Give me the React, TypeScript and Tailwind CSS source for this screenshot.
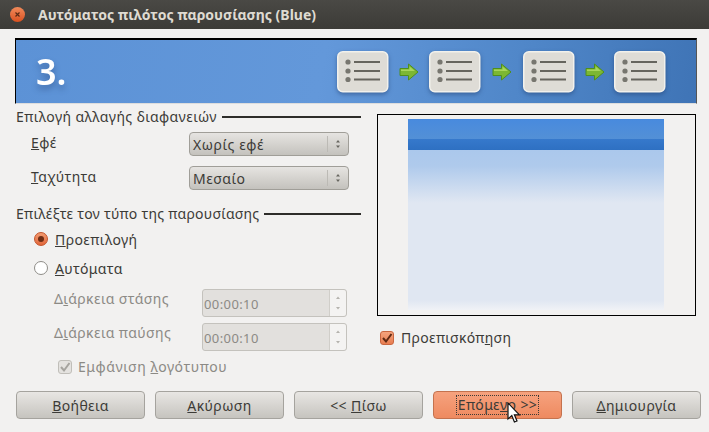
const btnBase = "h-[28px] w-[129px] rounded-[4px] border text-[14px] tracking-[0.4px] flex items-center justify-center";

function ListIcon() {
  return (
    <svg width="52" height="42" viewBox="0 0 52 42" className="drop-shadow-[0_2px_2px_rgba(30,60,110,0.5)]">
      <rect x="0.75" y="0.75" width="50" height="40" rx="5" fill="#dedcd6" stroke="#f2f1ec" strokeWidth="1.5" />
      <circle cx="11" cy="11" r="2.6" fill="#77766f" />
      <circle cx="11" cy="20" r="2.6" fill="#77766f" />
      <circle cx="11" cy="28.5" r="2.6" fill="#77766f" />
      <path d="M17 11H43M17 20H43M17 28.5H43" stroke="#66655e" strokeWidth="2" />
    </svg>
  );
}

function Arrow() {
  return (
    <svg width="20" height="18" viewBox="0 0 20 18">
      <path d="M1 5.5H9.5V1L19 9L9.5 17V12.5H1Z" fill="#7cb733" stroke="#4f8f1c" strokeWidth="1" />
      <path d="M2 6.5H10.5V3.5L16 8H2Z" fill="#a8d65c" />
    </svg>
  );
}

function Combo({ value }: { value: string }) {
  return (
    <div className="h-[24px] w-[160px] rounded-[4px] border border-[#a09e98] bg-gradient-to-b from-[#e6e4e1] to-[#c4c2bd] flex items-center text-[14px] tracking-[0.6px] text-[#3c3b37] pl-[3px]">
      <span className="flex-1">{value}</span>
      <div className="h-[16px] w-[1px] bg-[#bcbab5]" />
      <svg width="20" height="14" viewBox="0 0 20 14">
        <path d="M8 5.5L10 3L12 5.5Z M8 8.5L10 11L12 8.5Z" fill="#66655f" />
      </svg>
    </div>
  );
}

function Spin({ label, mnemonic, rest }: { label: string; mnemonic: string; rest: string }) {
  return (
    <div className="flex items-start">
      <span className="w-[186px] pl-[38px] text-[14px] tracking-[0.4px] text-[#8c8a85] mt-[-1px]">
        {label}
        <u>{mnemonic}</u>
        {rest}
      </span>
      <div className="h-[28px] w-[145px] rounded-[3px] border border-[#c4c2bd] bg-[#e2e0dd] flex text-[13px] tracking-[0.4px] text-[#8c8a85]">
        <span className="w-[127px] flex items-center pl-[1px] pt-[3px] border-r border-[#d0cec9]">00:00:10</span>
        <div className="flex-1 rounded-r-[3px] bg-[#f4f3f2] flex items-center justify-center">
          <svg width="10" height="18" viewBox="0 0 10 18">
            <path d="M3 5L5 2.5L7 5Z M3 13L5 15.5L7 13Z" fill="#b5b3ae" />
          </svg>
        </div>
      </div>
    </div>
  );
}

function GroupTitle({ text, wide }: { text: string; wide?: boolean }) {
  return (
    <div className={"flex items-center gap-[5px] text-[14px] leading-[18px] text-[#3c3b37] " + (wide ? "tracking-[0.4px]" : "tracking-[0.25px]")}>
      <span>{text}</span>
      <div className="h-[2px] flex-1 bg-[#2e2d2a]" />
    </div>
  );
}

function GrayButton({ children }: { children: React.ReactNode }) {
  return (
    <button className={btnBase + " border-[#a5a39e] bg-gradient-to-b from-[#e8e6e3] to-[#c6c4bf] text-[#3c3b37]"}>
      {children}
    </button>
  );
}

export default function App() {
  return (
    <div
      className="relative w-[709px] h-[432px] overflow-hidden bg-[#f2f1f0] flex flex-col"
      style={{ fontFamily: '"Noto Sans", sans-serif' }}
    >
      <div className="h-[29px] shrink-0 bg-gradient-to-b from-[#4a4945] to-[#3c3b37] flex items-center pl-[10px] gap-[13px]">
        <div className="w-[15px] h-[15px] rounded-full bg-gradient-to-b from-[#f08a5a] to-[#d9501e] flex items-center justify-center">
          <svg width="7" height="7" viewBox="0 0 7 7">
            <path d="M1.5 1.5L5.5 5.5M5.5 1.5L1.5 5.5" stroke="#5a2a14" strokeWidth="1.2" />
          </svg>
        </div>
        <span className="text-[14px] font-bold text-[#dfdbd2]">Αυτόματος πιλότος παρουσίασης (Blue)</span>
      </div>

      <div className="shrink-0 mx-[15px] mt-[9px] w-[682px] h-[66px] border-t-2 border-l border-t-black border-l-black border-r border-b border-r-[#555] border-b-[#ddd] bg-[linear-gradient(100deg,#5c92d6_0%,#6398da_45%,#4f86c8_75%,#3f74b6_100%)] flex items-center pr-[30px]">
        <span className="ml-[20px] text-[36px] leading-none font-semibold text-white flex-1 drop-shadow-[0_4px_3px_rgba(30,60,110,0.45)]">3.</span>
        <div className="flex items-center">
          <ListIcon />
          <div className="w-[40px] flex justify-center"><Arrow /></div>
          <ListIcon />
          <div className="w-[42px] flex justify-center"><Arrow /></div>
          <ListIcon />
          <div className="w-[39px] flex justify-center"><Arrow /></div>
          <ListIcon />
        </div>
      </div>

      <div className="flex pl-[16px] pt-[2px] flex-1">
        <div className="w-[345px] flex flex-col">
          <div className="mt-[2px]"><GroupTitle wide text="Επιλογή αλλαγής διαφανειών" /></div>
          <div className="mt-[6px] flex items-start">
            <span className="w-[173px] pl-[15px] text-[14px] tracking-[0.4px] text-[#3c3b37]"><u>Ε</u>φέ</span>
            <Combo value="Χωρίς εφέ" />
          </div>
          <div className="mt-[10px] flex items-start">
            <span className="w-[173px] pl-[15px] text-[14px] tracking-[0.4px] text-[#3c3b37]"><u>Τ</u>αχύτητα</span>
            <Combo value="Μεσαίο" />
          </div>

          <div className="mt-[15px]"><GroupTitle text="Επιλέξτε τον τύπο της παρουσίασης" /></div>

          <div className="mt-[6px] ml-[18px] flex items-center gap-[7px] h-[20px] text-[14px] tracking-[0.4px] text-[#3c3b37]">
            <div className="w-[14px] h-[14px] rounded-full border border-[#c4532a] bg-gradient-to-b from-[#f29a70] to-[#e2673a] flex items-center justify-center">
              <div className="w-[6px] h-[6px] rounded-full bg-[#6e2d14]" />
            </div>
            <span><u>Π</u>ροεπιλογή</span>
          </div>
          <div className="mt-[9px] ml-[18px] flex items-center gap-[7px] h-[20px] text-[14px] tracking-[0.4px] text-[#3c3b37]">
            <div className="w-[14px] h-[14px] rounded-full border border-[#8f8d88] bg-white" />
            <span><u>Α</u>υτόματα</span>
          </div>

          <div className="mt-[11px] flex flex-col gap-[6px]">
            <Spin label="Δ" mnemonic="ι" rest="άρκεια στάσης" />
            <Spin label="Δ" mnemonic="ι" rest="άρκεια παύσης" />
          </div>

          <div className="mt-[5px] ml-[42px] flex items-center gap-[6px] text-[14px] tracking-[0.55px] text-[#8c8a85]">
            <div className="w-[14px] h-[14px] rounded-[3px] border border-[#c0beb9] bg-[#e4e2df] flex items-center justify-center">
              <svg width="12" height="12" viewBox="0 0 12 12">
                <path d="M2 6L5 9.5L10.5 2" fill="none" stroke="#a5a39e" strokeWidth="2" />
              </svg>
            </div>
            <span>Εμφάνιση <u>λ</u>ογότυπου</span>
          </div>
        </div>

        <div className="ml-[16px] flex flex-col mt-[8px]">
          <div className="w-[319px] h-[202px] border border-black pl-[30px] pt-[4px]">
            <div className="w-[256px] h-[191px] flex flex-col">
              <div className="h-[31px] flex flex-col">
                <div className="h-[20px] bg-gradient-to-b from-[#488ade] to-[#5390d6]" />
                <div className="h-[11px] bg-gradient-to-b from-[#3679cc] to-[#2e70c2]" />
              </div>
              <div className="flex-1 bg-[linear-gradient(to_bottom,#abc8ec_0%,#afcaec_10%,#e0e7f2_33%,#e0e7f2_94%,#f0f2f6_100%)]" />
            </div>
          </div>
          <div className="mt-[11px] ml-[3px] flex items-center gap-[7px] text-[14px] tracking-[0.3px] text-[#3c3b37]">
            <div className="w-[14px] h-[14px] rounded-[3px] border border-[#c9663f] bg-gradient-to-b from-[#f4a47e] to-[#e87d50] flex items-center justify-center">
              <svg width="12" height="12" viewBox="0 0 12 12">
                <path d="M2 6L5 9.5L10.5 2" fill="none" stroke="#5f2a14" strokeWidth="2" />
              </svg>
            </div>
            <span>Προεπισκόπ<u>η</u>ση</span>
          </div>
        </div>
      </div>

      <div className="shrink-0 flex justify-between pl-[16px] pr-[8px] mb-[13px]">
        <GrayButton><u>Β</u>οήθεια</GrayButton>
        <GrayButton><u>Α</u>κύρωση</GrayButton>
        <GrayButton><span className="whitespace-pre">&lt;&lt; <u>Π</u>ίσω</span></GrayButton>
        <button className={btnBase + " border-[#c4724e] bg-gradient-to-b from-[#f6a27e] to-[#ee8a60] text-[#3c3b37]"}>
          <span className="border border-dotted border-[#3c3b37] px-[1px] leading-[18px]">Επόμε<u>ν</u>ο &gt;&gt;</span>
        </button>
        <GrayButton><u>Δ</u>ημιουργία</GrayButton>
      </div>

      <svg className="absolute left-[507px] top-[402px]" width="14" height="22" viewBox="0 0 14 22">
        <path d="M1 1V17L4.8 13.6L7.4 20L10 19L7.4 12.8H12.4Z" fill="#fff" stroke="#111" strokeWidth="1.2" />
      </svg>
    </div>
  );
}
